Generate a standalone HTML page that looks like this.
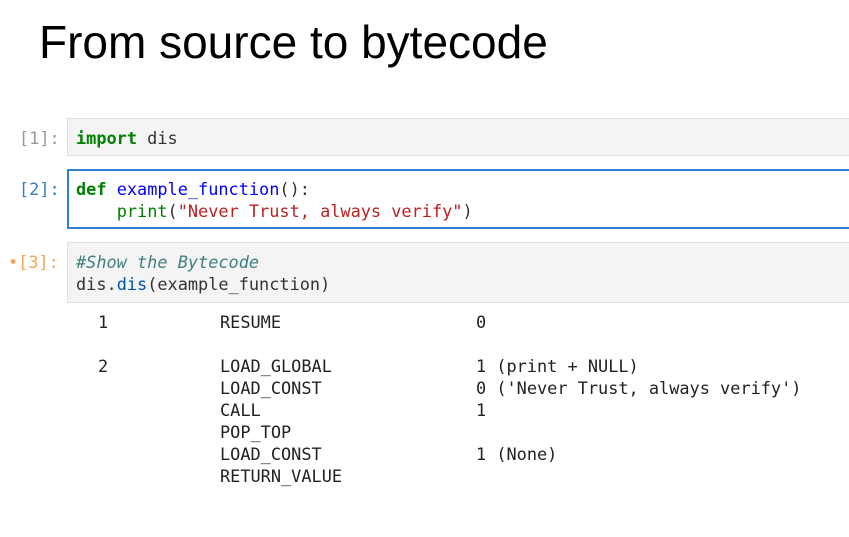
<!DOCTYPE html>
<html><head><style>
body{margin:0;width:849px;height:537px;background:#fff;position:relative;overflow:hidden;font-family:"DejaVu Sans Mono",monospace;}
h1{position:absolute;left:39px;top:17px;margin:0;font:400 46px "Liberation Sans",sans-serif;color:#000;white-space:nowrap;line-height:50px}
.p{position:absolute;font-size:16.9px;color:#999;line-height:22px;white-space:pre}
.cell{position:absolute;left:67px;width:800px;background:#f4f4f4;border:1px solid #e0e0e0;box-sizing:border-box}
.c{position:absolute;left:76px;font-size:16.9px;line-height:22px;white-space:pre;color:#333}
.k{color:#008000;font-weight:bold}.f{color:#0000ff}.b{color:#008000}.s{color:#ba2121}.cm{color:#408080;font-style:italic}.d{color:#0054aa}
.o{position:absolute;font-size:16.9px;line-height:22px;white-space:pre;color:#222}
</style></head><body>
<h1>From source to bytecode</h1>
<div class="p" style="left:19px;top:127px">[1]:</div>
<div class="cell" style="top:118px;height:38px"></div>
<div class="c" style="top:127px"><span class="k">import</span> dis</div>
<div class="p" style="left:19px;top:178px;color:#307fc1">[2]:</div>
<div class="cell" style="top:169px;height:60px;background:#fff;border:2px solid #2f80d1"></div>
<div class="c" style="top:178px"><span class="k">def</span> <span class="f">example_function</span>():
    <span class="b">print</span>(<span class="s">"Never Trust, always verify"</span>)</div>
<div class="p" style="left:8px;top:251px;color:#f2a65a">•[3]:</div>
<div class="cell" style="top:242px;height:61px"></div>
<div class="c" style="top:251px"><span class="cm">#Show the Bytecode</span>
dis.<span class="d">dis</span>(example_function)</div>
<div class="o" style="left:98px;top:311px">1</div>
<div class="o" style="left:98px;top:355px">2</div>
<div class="o" style="left:220px;top:311px">RESUME

LOAD_GLOBAL
LOAD_CONST
CALL
POP_TOP
LOAD_CONST
RETURN_VALUE</div>
<div class="o" style="left:476px;top:311px">0

1 (print + NULL)
0 ('Never Trust, always verify')
1

1 (None)</div>
</body></html>
